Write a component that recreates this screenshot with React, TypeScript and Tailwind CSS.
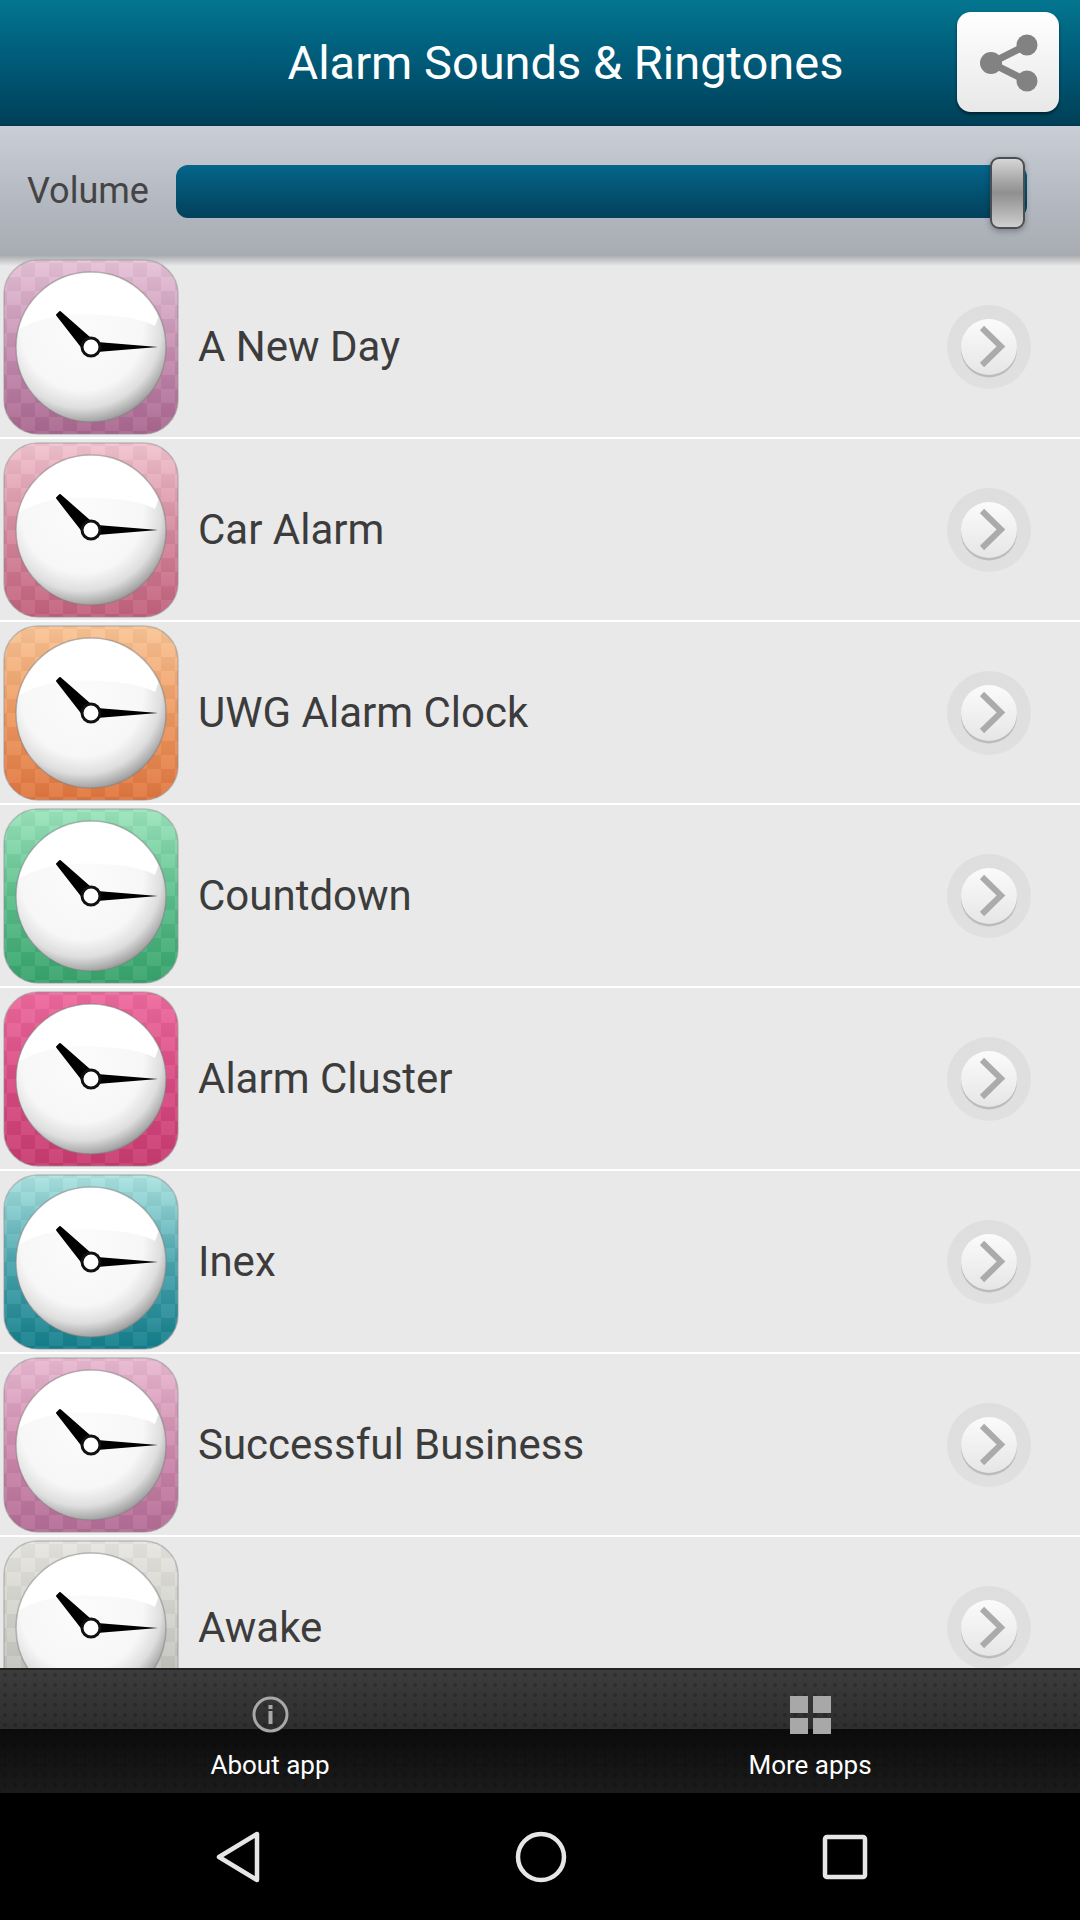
import { useId } from 'react'

const sounds = [
  { name: 'A New Day', top: '#e6c3d8', mid: '#c78fb2', bottom: '#a9668f' },
  { name: 'Car Alarm', top: '#f2c4d0', mid: '#d68a9f', bottom: '#c2607c' },
  { name: 'UWG Alarm Clock', top: '#fac596', mid: '#ee9a62', bottom: '#e0763f' },
  { name: 'Countdown', top: '#9ce5bd', mid: '#5cbf8c', bottom: '#36a36c' },
  { name: 'Alarm Cluster', top: '#ee6a9e', mid: '#d94b83', bottom: '#c83c70' },
  { name: 'Inex', top: '#ade4e2', mid: '#4aa5ae', bottom: '#137e8c' },
  { name: 'Successful Business', top: '#e9bad2', mid: '#cf8bae', bottom: '#b46c95' },
  { name: 'Awake', top: '#e6e5df', mid: '#d0d0ca', bottom: '#b4b4b0' },
]

type ClockIconProps = { top: string; mid: string; bottom: string }

function ClockIcon({ top, mid, bottom }: ClockIconProps) {
  const id = useId()
  return (
    <svg width="176" height="176" viewBox="0 0 176 176" className="shrink-0 blur-[0.6px]">
      <defs>
        <linearGradient id={`${id}bg`} x1="0" y1="0" x2="0" y2="1">
          <stop offset="0" stopColor={top} />
          <stop offset="0.5" stopColor={mid} />
          <stop offset="1" stopColor={bottom} />
        </linearGradient>
        <pattern id={`${id}chk`} width="28" height="28" patternUnits="userSpaceOnUse" x="4" y="4">
          <rect width="14" height="14" fill="#ffffff" opacity="0.06" />
          <rect x="14" y="14" width="14" height="14" fill="#ffffff" opacity="0.06" />
          <rect x="14" width="14" height="14" fill="#000000" opacity="0.03" />
          <rect y="14" width="14" height="14" fill="#000000" opacity="0.03" />
        </pattern>
        <radialGradient id={`${id}face`} cx="0.44" cy="0.38" r="0.66">
          <stop offset="0" stopColor="#fbfbfb" />
          <stop offset="0.62" stopColor="#f7f7f7" />
          <stop offset="0.8" stopColor="#dedede" />
          <stop offset="0.93" stopColor="#a8a8a8" />
          <stop offset="1" stopColor="#808080" />
        </radialGradient>
        <clipPath id={`${id}clip`}>
          <circle cx="88" cy="88" r="74" />
        </clipPath>
      </defs>
      <rect x="1" y="1" width="174" height="174" rx="34" fill={`url(#${id}bg)`} stroke="#8f8f8f" strokeOpacity="0.5" strokeWidth="1.5" />
      <rect x="1" y="1" width="174" height="174" rx="34" fill={`url(#${id}chk)`} />
      <circle cx="88" cy="88" r="75" fill={`url(#${id}face)`} stroke="#808080" strokeOpacity="0.5" strokeWidth="1.5" />
      <path
        d="M10 74 C 35 58 60 54 97 56 C 120 57 140 60 152 67 L 176 0 L 0 0 Z"
        fill="#ffffff"
        clipPath={`url(#${id}clip)`}
      />
      <path d="M54 56 L57 53 L90 82 L82 92 Z" fill="#000000" stroke="#000000" strokeWidth="2" strokeLinejoin="round" />
      <path d="M94 83 L155 88 L94 93 Z" fill="#000000" />
      <circle cx="88" cy="88" r="9" fill="#ffffff" stroke="#111111" strokeWidth="3" />
    </svg>
  )
}

function NextButton() {
  return (
    <svg width="84" height="84" viewBox="0 0 84 84" className="shrink-0 blur-[0.5px]">
      <defs>
        <linearGradient id="nextOuter" x1="0" y1="0" x2="0" y2="1">
          <stop offset="0" stopColor="#dedede" />
          <stop offset="1" stopColor="#e0e0e0" />
        </linearGradient>
        <linearGradient id="nextInner" x1="0" y1="0" x2="0" y2="1">
          <stop offset="0" stopColor="#fbfbfb" />
          <stop offset="1" stopColor="#e6e6e6" />
        </linearGradient>
      </defs>
      <circle cx="42" cy="42" r="42" fill="url(#nextOuter)" />
      <circle cx="42" cy="44.5" r="28" fill="#bcbcbc" />
      <circle cx="42" cy="42" r="28" fill="url(#nextInner)" />
      <path d="M35 23 L54 41.5 L35 60" fill="none" stroke="#ababab" strokeWidth="6" />
    </svg>
  )
}

export default function App() {
  return (
    <div className="w-[1080px] h-[1920px] flex flex-col overflow-hidden bg-black font-['Roboto',sans-serif]">
      {/* Header */}
      <div className="h-[126px] shrink-0 flex items-center bg-gradient-to-b from-[#04768f] via-[#005a78] to-[#004058] border-b-2 border-[#003a50]">
        <div className="flex-1 text-center text-white text-[47px] pl-[174px] mt-[2px]">Alarm Sounds &amp; Ringtones</div>
        <button className="w-[102px] h-[100px] mr-[21px] rounded-[14px] bg-gradient-to-b from-[#ffffff] to-[#e8e8e8] shadow-[0_2px_3px_rgba(0,0,0,0.5)] flex items-center justify-center">
          <svg width="102" height="100" viewBox="0 0 102 100">
            <path d="M70 33 L34 51 L70 69" fill="none" stroke="#828282" strokeWidth="7" />
            <circle cx="34" cy="51" r="11" fill="#828282" />
            <circle cx="70" cy="33" r="10.5" fill="#828282" />
            <circle cx="70" cy="69" r="10.5" fill="#828282" />
          </svg>
        </button>
      </div>

      {/* Volume */}
      <div className="h-[130px] shrink-0 flex items-center pl-[27px] bg-gradient-to-b from-[#c9ced7] via-[#b6bbc4] to-[#a8acb2]">
        <span className="w-[149px] text-[36px] text-[#444444]">Volume</span>
        <div className="relative w-[851px] h-[53px] rounded-[12px] bg-gradient-to-b from-[#04668a] to-[#03405c]">
          <div className="absolute left-[814px] top-[-8px] w-[35px] h-[72px] rounded-[9px] border-2 border-[#4a4f55] bg-gradient-to-b from-[#d6d6d6] via-[#8f8f8f] to-[#cfcfcf] shadow-[0_2px_6px_rgba(0,0,0,0.3)]" />
        </div>
      </div>

      {/* Sound list */}
      <div className="relative h-[1412px] shrink-0 overflow-hidden bg-[#e9e9e9]">
        <div className="absolute top-0 left-0 right-0 h-[10px] bg-gradient-to-b from-[#adafb2] to-[#e9e9e9]" />
        {sounds.map((sound) => (
          <div key={sound.name} className="relative h-[183px] shrink-0 flex items-center pl-[3px] pr-[49px] border-b-2 border-white">
            <ClockIcon top={sound.top} mid={sound.mid} bottom={sound.bottom} />
            <span className="flex-1 ml-[19px] text-[42px] text-[#3c3c3c]">{sound.name}</span>
            <NextButton />
          </div>
        ))}
      </div>

      {/* Bottom bar */}
      <div className="relative h-[125px] shrink-0 grid grid-cols-2 border-t-2 border-[#222222]">
        <div className="absolute inset-0 flex flex-col">
          <div className="h-[59px] bg-gradient-to-b from-[#3c3c3c] to-[#2e2e2e]" />
          <div className="flex-1 bg-gradient-to-b from-[#0b0b0b] to-[#1c1c1c]" />
        </div>
        <div className="absolute inset-0 bg-[radial-gradient(circle,rgba(0,0,0,0.18)_1.5px,transparent_2.5px)] bg-[length:10px_10px]" />
        <div className="relative flex flex-col items-center pt-[26px]">
          <svg width="37" height="37" viewBox="0 0 37 37">
            <circle cx="18.5" cy="18.5" r="16.5" fill="none" stroke="#a8a8a8" strokeWidth="3" />
            <rect x="16.5" y="15" width="4" height="13" fill="#a8a8a8" />
            <rect x="16.5" y="9" width="4" height="4" fill="#a8a8a8" />
          </svg>
          <span className="mt-[13px] text-[26px] text-white">About app</span>
        </div>
        <div className="relative flex flex-col items-center pt-[26px]">
          <div className="grid grid-cols-2 gap-[5px] w-[41px] h-[38px]">
            <div className="bg-[#a8a8a8]" />
            <div className="bg-[#a8a8a8]" />
            <div className="bg-[#a8a8a8]" />
            <div className="bg-[#a8a8a8]" />
          </div>
          <span className="mt-[12px] text-[26px] text-white">More apps</span>
        </div>
      </div>

      {/* Navigation bar */}
      <div className="flex-1 flex items-center justify-center bg-black">
        <svg width="50" height="54" viewBox="0 0 50 54">
          <path d="M44 4 L44 50 L6 27 Z" fill="none" stroke="#e6e6e6" strokeWidth="4.5" strokeLinejoin="round" />
        </svg>
        <svg width="54" height="54" viewBox="0 0 54 54" className="ml-[251px]">
          <circle cx="27" cy="27" r="23" fill="none" stroke="#e6e6e6" strokeWidth="4.5" />
        </svg>
        <svg width="46" height="46" viewBox="0 0 46 46" className="ml-[254px]">
          <rect x="3" y="3" width="40" height="40" rx="2" fill="none" stroke="#e6e6e6" strokeWidth="4.5" />
        </svg>
      </div>
    </div>
  )
}
